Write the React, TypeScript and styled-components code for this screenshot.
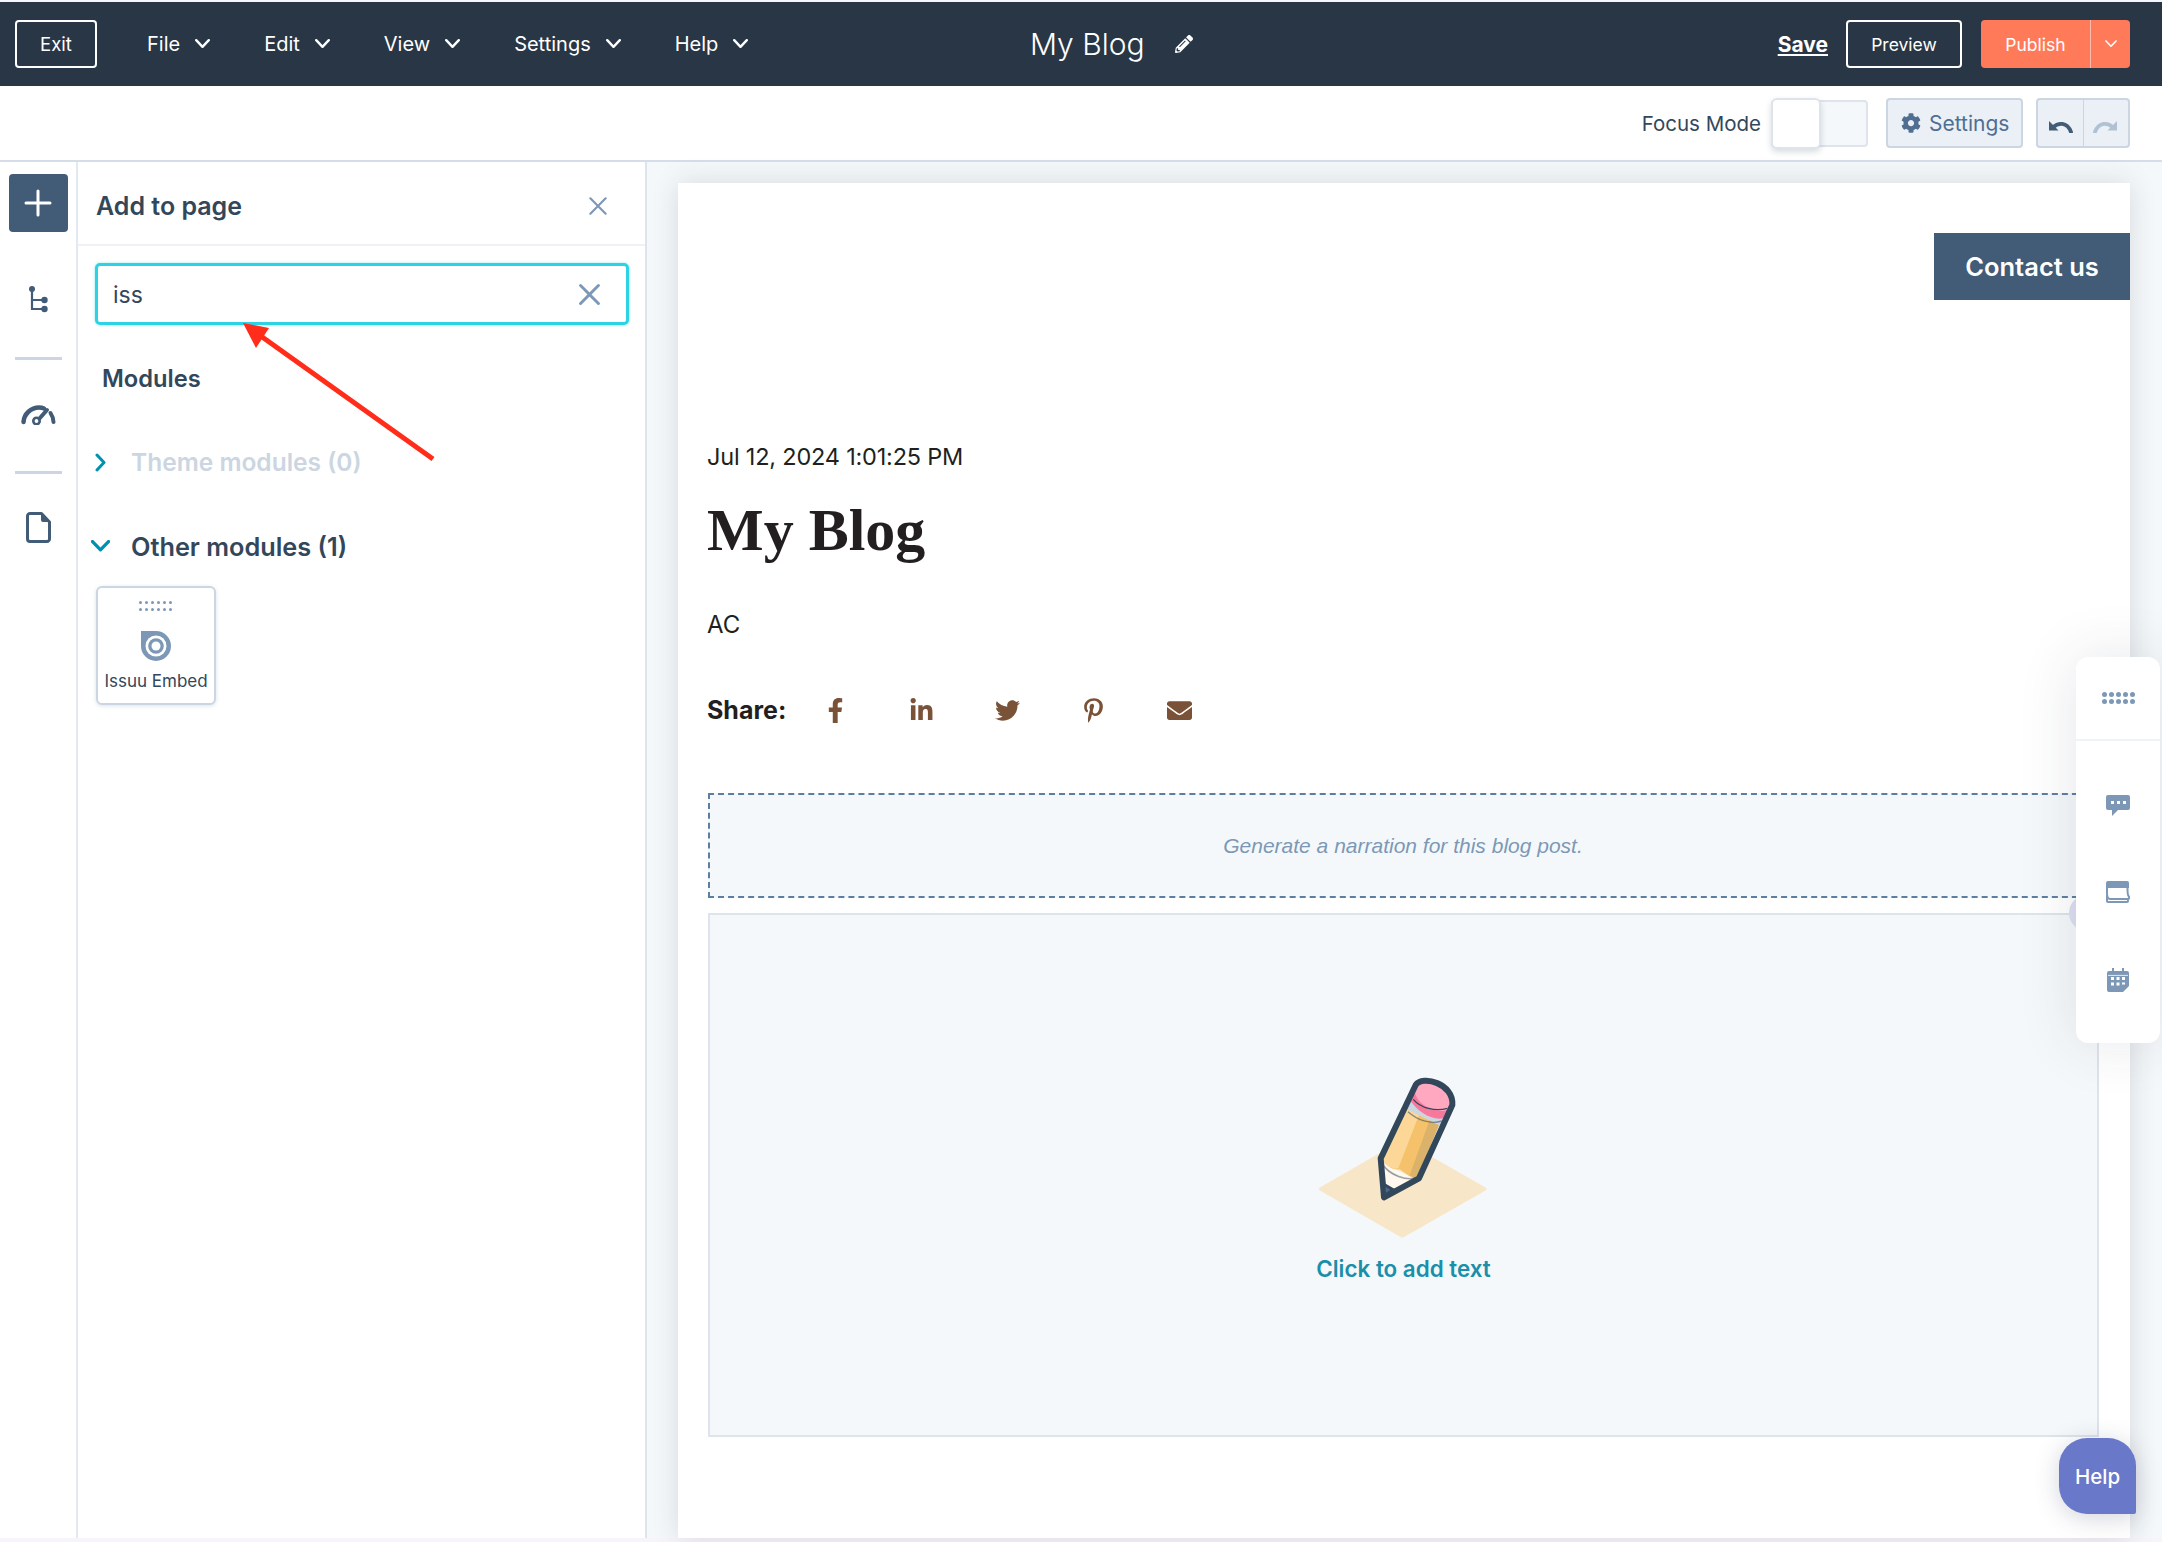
import React from "react";
import styled, { createGlobalStyle } from "styled-components";
import { FaFacebookF, FaLinkedinIn, FaTwitter, FaPinterestP, FaEnvelope, FaCog, FaPencilAlt } from "react-icons/fa";

const Global = createGlobalStyle`
  html, body { margin: 0; padding: 0; background: #f5f8fa; }
  * { box-sizing: border-box; }
  #root { width: 2162px; height: 1542px; overflow: hidden; }
`;

const UI = `Inter, "Noto Sans", sans-serif`;
const BLOG = `Inter, "Open Sans", sans-serif`;

const Shell = styled.div`
  position: relative;
  width: 2162px;
  height: 1542px;
  padding: 2px 0 4px;
  display: flex;
  flex-direction: column;
  background: #f8f4fb;
  font-family: ${UI};
  overflow: hidden;
`;
const TopBar = styled.header`
  flex: 0 0 84px;
  display: flex;
  align-items: center;
  background: #293645;
  color: #fff;
  padding: 0 32px 0 15px;
`;
const TopLeft = styled.div`
  flex: 0 0 1015px;
  display: flex;
  align-items: center;
`;
const OutlineButton = styled.button<{ $w: number; $size: number }>`
  width: ${(p) => p.$w}px;
  height: 48px;
  background: transparent;
  border: 2px solid #fff;
  border-radius: 4px;
  color: #fff;
  font: 400 ${(p) => p.$size}px ${UI};
  padding: 0;
`;
const MenuList = styled.nav`
  display: flex;
  margin-left: 50px;
  gap: 54px;
`;
const MenuItem = styled.span`
  display: flex;
  align-items: center;
  gap: 15px;
  font-size: 20px;
  font-weight: 400;
`;
const TitleGroup = styled.div`
  flex: 1;
  display: flex;
  align-items: center;
  gap: 30px;
`;
const DocTitle = styled.span`
  font-size: 30px;
  font-weight: 300;
  line-height: 40px;
`;
const TopRight = styled.div`
  display: flex;
  align-items: center;
`;
const SaveLink = styled.a`
  font-size: 21px;
  font-weight: 700;
  text-decoration: underline;
  margin-right: 18px;
`;
const PublishGroup = styled.div`
  display: flex;
  height: 48px;
  width: 149px;
  margin-left: 19px;
  background: #ff7a59;
  border-radius: 4px;
  font-size: 17.5px;
`;
const PublishLabel = styled.span`
  flex: 0 0 110px;
  display: flex;
  align-items: center;
  justify-content: center;
  border-right: 1px solid #ffbcac;
`;
const PublishCaret = styled.span`
  flex: 1;
  display: flex;
  align-items: center;
  justify-content: center;
`;
const SubBar = styled.div`
  flex: 0 0 76px;
  display: flex;
  align-items: center;
  justify-content: flex-end;
  background: #fff;
  border-bottom: 2px solid #d5dee8;
  padding: 0 32px 0 0;
`;
const FocusLabel = styled.span`
  font-size: 20.5px;
  color: #33475b;
  margin-right: 10px;
`;
const Toggle = styled.div`
  position: relative;
  width: 97px;
  height: 47px;
  background: #f5f8fa;
  border: 2px solid #dfe3eb;
  border-radius: 4px;
`;
const ToggleKnob = styled.div`
  position: absolute;
  left: -2px;
  top: -4px;
  width: 50px;
  height: 51px;
  background: #fff;
  border: 2px solid #dfe3eb;
  border-radius: 6px;
  box-shadow: 0 3px 6px rgba(40, 60, 80, 0.18);
`;
const SettingsButton = styled.button`
  width: 137px;
  height: 50px;
  margin-left: 18px;
  display: flex;
  align-items: center;
  gap: 8px;
  padding: 0 0 0 13px;
  background: #eaf0f6;
  border: 2px solid #cbd6e2;
  border-radius: 4px;
  color: #506e91;
  font: 400 21px ${UI};
`;
const UndoGroup = styled.div`
  width: 94px;
  height: 50px;
  margin-left: 13px;
  display: flex;
  background: #eaf0f6;
  border: 2px solid #cbd6e2;
  border-radius: 4px;
`;
const UndoCell = styled.span<{ $divider?: boolean; $color: string }>`
  flex: 1;
  display: flex;
  align-items: center;
  justify-content: center;
  padding-top: 6px;
  color: ${(p) => p.$color};
  border-right: ${(p) => (p.$divider ? "1px solid #cbd6e2" : "none")};
`;
const Main = styled.div`
  flex: 1;
  min-height: 0;
  display: flex;
`;
const Rail = styled.aside`
  flex: 0 0 78px;
  display: flex;
  flex-direction: column;
  align-items: center;
  padding-top: 12px;
  background: #fff;
  border-right: 2px solid #e3e9f0;
`;
const AddButton = styled.div`
  width: 59px;
  height: 58px;
  display: flex;
  align-items: center;
  justify-content: center;
  background: #425b76;
  border-radius: 4px;
  margin-bottom: 54px;
`;
const RailIcon = styled.svg<{ $after: number }>`
  display: block;
  margin-bottom: ${(p) => p.$after}px;
`;
const RailRule = styled.div<{ $after: number }>`
  width: 47px;
  height: 3px;
  background: #cbd6e2;
  margin-bottom: ${(p) => p.$after}px;
`;
const Panel = styled.section`
  flex: 0 0 569px;
  background: #fff;
  border-right: 2px solid #dfe3eb;
  color: #33475b;
`;
const PanelHead = styled.div`
  height: 84px;
  display: flex;
  align-items: center;
  justify-content: space-between;
  padding: 6px 38px 0 18px;
  border-bottom: 2px solid #eef2f6;
`;
const PanelTitle = styled.h2`
  margin: 0;
  font-size: 25px;
  font-weight: 600;
`;
const SearchBox = styled.div`
  margin: 17px 0 0 17px;
  width: 534px;
  height: 62px;
  display: flex;
  align-items: center;
  justify-content: space-between;
  padding: 1px 26px 0 15px;
  border: 3px solid #2dd3e4;
  border-radius: 5px;
  background: #fff;
  font-size: 23px;
  box-shadow: 0 0 3px rgba(0, 208, 228, 0.45);
`;
const SectionTitle = styled.h3`
  margin: 39px 0 0 24px;
  font-size: 23.7px;
  line-height: 30px;
  font-weight: 600;
`;
const Group = styled.div<{ $top: number; $muted?: boolean; $size: number }>`
  display: flex;
  align-items: center;
  height: 30px;
  margin-top: ${(p) => p.$top}px;
  color: ${(p) => (p.$muted ? "#cbd6e2" : "#33475b")};
  font-size: ${(p) => p.$size}px;
  font-weight: 600;
`;
const GroupChevron = styled.span`
  flex: 0 0 53px;
  display: flex;
  justify-content: center;
  padding-right: 9px;
`;
const ModuleCard = styled.div`
  margin: 25px 0 0 18px;
  width: 120px;
  height: 119px;
  display: flex;
  flex-direction: column;
  align-items: center;
  padding-top: 13px;
  border: 2px solid #cbd6e2;
  border-radius: 6px;
  box-shadow: 0 1px 4px rgba(80, 110, 145, 0.2);
  background: #fff;
`;
const ModuleGrip = styled.svg`
  display: block;
`;
const ModuleLogo = styled.svg`
  display: block;
  margin-top: 20px;
`;
const ModuleName = styled.span`
  margin-top: 10px;
  font-size: 17px;
  font-weight: 400;
  white-space: nowrap;
  color: #33475b;
`;
const Canvas = styled.main`
  flex: 1;
  min-width: 0;
  padding: 21px 32px 0 31px;
  background: #f5f8fa;
`;
const BlogPage = styled.div`
  height: 100%;
  background: #fff;
  box-shadow: 0 0 26px rgba(30, 40, 50, 0.14);
  display: flex;
  flex-direction: column;
  font-family: ${BLOG};
  color: #231f20;
`;
const BlogHeader = styled.div`
  display: flex;
  justify-content: flex-end;
  padding-top: 50px;
`;
const ContactButton = styled.a`
  width: 196px;
  height: 67px;
  display: flex;
  align-items: center;
  justify-content: center;
  background: #425b76;
  color: #fff;
  font-size: 25.5px;
  font-weight: 600;
`;
const BlogBody = styled.div`
  padding: 142px 0 0 29px;
`;
const DateLine = styled.div`
  font-size: 23.5px;
  line-height: 30px;
  font-weight: 400;
  letter-spacing: -0.2px;
`;
const BlogTitle = styled.h1`
  margin: 23px 0 0;
  font-family: "Liberation Serif", "DejaVu Serif", serif;
  font-size: 60px;
  line-height: 70px;
  font-weight: 700;
`;
const Author = styled.div`
  margin-top: 45px;
  font-size: 24px;
  line-height: 30px;
`;
const ShareRow = styled.div`
  display: flex;
  align-items: center;
  height: 34px;
  margin-top: 53px;
  font-size: 25px;
  font-weight: 700;
`;
const ShareLabel = styled.span`
  width: 85px;
`;
const ShareIcon = styled.span`
  flex: 0 0 86px;
  display: flex;
  justify-content: center;
  color: #7a5238;
  font-size: 25px;
`;
const Narration = styled.div`
  margin: 66px 0 0 1px;
  height: 105px;
  width: 1400px;
  display: flex;
  align-items: center;
  justify-content: center;
  padding-right: 10px;
  background: #f5f8fa;
  border: 2px dashed #5d7ea3;
  font: italic 400 21px "Liberation Sans", Arial, sans-serif;
  color: #7c98b6;
`;
const TextArea = styled.div`
  margin: 15px 0 0 1px;
  height: 524px;
  width: 1391px;
  display: flex;
  flex-direction: column;
  align-items: center;
  padding-top: 155px;
  background: #f5f8fa;
  border: 2px solid #dfe3eb;
`;
const PencilSvg = styled.svg`
  display: block;
  flex: none;
`;
const AddText = styled.span`
  margin-top: 15px;
  font-size: 22.4px;
  font-weight: 600;
  color: #1a8fa9;
  line-height: 28px;
`;
const Handle = styled.div`
  position: absolute;
  left: 2069px;
  top: 895px;
  width: 36px;
  height: 36px;
  border-radius: 50%;
  background: #dde0f1;
`;
const Dock = styled.div`
  position: absolute;
  left: 2076px;
  top: 657px;
  width: 84px;
  height: 386px;
  background: #fff;
  border-radius: 12px;
  box-shadow: 0 0 60px rgba(40, 50, 70, 0.12);
`;
const DockTop = styled.div`
  height: 84px;
  display: flex;
  align-items: center;
  justify-content: center;
  border-bottom: 2px solid #eef3f8;
`;
const DockList = styled.div`
  display: flex;
  flex-direction: column;
  align-items: center;
  gap: 65px;
  padding: 54px 0 0;
`;
const HelpBubble = styled.div`
  position: absolute;
  left: 2059px;
  top: 1438px;
  width: 77px;
  height: 76px;
  display: flex;
  align-items: center;
  justify-content: center;
  background: #6a78c9;
  border-radius: 28px 28px 2px 28px;
  color: #fff;
  font: 500 20.5px ${BLOG};
  box-shadow: 0 4px 24px rgba(50, 60, 90, 0.22);
`;
const Pointer = styled.svg`
  position: absolute;
  left: 230px;
  top: 310px;
  pointer-events: none;
`;
const FlipSvg = styled.svg<{ $flip?: boolean }>`
  display: block;
  transform: ${(p) => (p.$flip ? "scaleX(-1)" : "none")};
`;

const Chevron = ({ size = 15, color = "#fff", w = 2.4 }: { size?: number; color?: string; w?: number }) => (
  <svg width={size} height={size * 0.62} viewBox="0 0 15 9.3" fill="none">
    <path d="M1.2 1.2 7.5 7.8l6.3-6.6" stroke={color} strokeWidth={w} strokeLinecap="round" strokeLinejoin="round" />
  </svg>
);
const Cross = ({ size, w, color = "#7c98b6" }: { size: number; w: number; color?: string }) => (
  <svg width={size} height={size} viewBox="0 0 20 20" fill="none">
    <path d="M1.5 1.5l17 17M18.5 1.5l-17 17" stroke={color} strokeWidth={w} strokeLinecap="round" />
  </svg>
);
const UndoGlyph = ({ flip }: { flip?: boolean }) => (
  <FlipSvg $flip={flip} width="25" height="13" viewBox="0 0 25 13" fill="none">
    <path d="M1 1v9.500h9.500z" fill="currentColor" />
    <path d="M5 7.500C10 2.500 19 1.500 23 12" stroke="currentColor" strokeWidth="3.800" strokeLinecap="round" />
  </FlipSvg>
);

const PencilArt = () => (
  <PencilSvg width="170" height="170" viewBox="120 90 510 510" fill="none">
    <path d="M125 447 370 306 617 447 370 588z" fill="#f8e6c8" stroke="#f8e6c8" strokeWidth="10" strokeLinejoin="round" />
    <path d="M312 370 412 418 318 470z" fill="#fff8ee" />
    <path d="M318 430 352 450 318 470z" fill="#425b76" />
    <path d="M385 205 480 255 415 410C395 420 380 398 362 388 345 390 325 385 310 355z" fill="#f5c26b" />
    <path d="M385 205 420 225 358 385C345 388 325 385 310 355z" fill="#fcd797" />
    <path d="M452 240 480 255 415 410C408 414 400 412 392 406z" fill="#dbb26a" />
    <path d="M395 178 505 225 490 260 378 205z" fill="#cbd6e2" />
    <path d="M410 135 520 195 503 232C470 245 420 225 392 178z" fill="#f8789b" />
    <ellipse cx="466" cy="168" rx="62" ry="40" transform="rotate(26 466 168)" fill="#ffa8c0" />
    <path d="M403 178C425 205 470 215 505 205" stroke="#33475b" strokeWidth="4" />
    <path d="M387 215C415 240 455 255 488 243" stroke="#33475b" strokeWidth="4" opacity=".55" />
    <path d="M315 472 305 355 410 135C430 105 525 130 520 195L420 415z" stroke="#33475b" strokeWidth="18" strokeLinejoin="round" />
    <path d="M310 372C330 405 385 425 416 412" stroke="#33475b" strokeWidth="5" opacity=".5" />
    <path d="M318 432 352 450 318 470z" fill="#33475b" />
    <path d="M320 440 334 450 320 458z" fill="#4b6a8e" />
  </PencilSvg>
);

const Dots = () => (
  <svg width="33" height="12" viewBox="0 0 33 12" fill="#7c98b6">
    {[2.5, 9.5, 16.5, 23.5, 30.5].map((x) => (
      <React.Fragment key={x}>
        <circle cx={x} cy="2.500" r="2.500" />
        <circle cx={x} cy="9.500" r="2.500" />
      </React.Fragment>
    ))}
  </svg>
);
const ChatGlyph = () => (
  <svg width="24" height="21" viewBox="0 0 24 21">
    <path d="M2 0h20a2 2 0 0 1 2 2v11a2 2 0 0 1-2 2H12l-6 6v-6H2a2 2 0 0 1-2-2V2a2 2 0 0 1 2-2z" fill="#7c98b6" />
    <path d="M5 6h3v3H5zM11 6h3v3h-3zM17 6h3v3h-3z" fill="#fff" />
  </svg>
);
const NoteGlyph = () => (
  <svg width="24" height="22" viewBox="0 0 24 22" fill="none">
    <path d="M2 0h19a2 2 0 0 1 2 2v5H0V2a2 2 0 0 1 2-2z" fill="#7c98b6" />
    <path d="M1 7v5c0 3 1 6 3 6h18c1.500 0 1.500-2 .5-3-1-1-1-5-1-8" stroke="#7c98b6" strokeWidth="2" />
    <path d="M1 14v6a1 1 0 0 0 1 1h19a1 1 0 0 0 1-1v-1" stroke="#7c98b6" strokeWidth="2" />
  </svg>
);
const CalendarGlyph = () => (
  <svg width="22" height="24" viewBox="0 0 22 24">
    <path d="M5 0h2v3h8V0h2v3h3a2 2 0 0 1 2 2v13l-6 6H2a2 2 0 0 1-2-2V5a2 2 0 0 1 2-2h3z" fill="#7c98b6" />
    <path d="M4 9h3v3H4zM9.500 9h3v3h-3zM15 9h3v3h-3zM4 14.500h3v3H4zM9.500 14.500h3v3h-3zM15 14.500h3v2h-3z" fill="#fff" />
    <path d="M1 7.400h20" stroke="#fff" strokeWidth=".8" />
  </svg>
);

export default function App() {
  const menus = ["File", "Edit", "View", "Settings", "Help"];
  return (
    <Shell>
      <Global />
      <TopBar>
        <TopLeft>
          <OutlineButton $w={82} $size={18.5}>Exit</OutlineButton>
          <MenuList>
            {menus.map((m) => (
              <MenuItem key={m}>
                {m}
                <Chevron />
              </MenuItem>
            ))}
          </MenuList>
        </TopLeft>
        <TitleGroup>
          <DocTitle>My Blog</DocTitle>
          <FaPencilAlt size={18} color="#fff" />
        </TitleGroup>
        <TopRight>
          <SaveLink>Save</SaveLink>
          <OutlineButton $w={116} $size={17.5}>Preview</OutlineButton>
          <PublishGroup>
            <PublishLabel>Publish</PublishLabel>
            <PublishCaret>
              <Chevron size={12} w={2} />
            </PublishCaret>
          </PublishGroup>
        </TopRight>
      </TopBar>
      <SubBar>
        <FocusLabel>Focus Mode</FocusLabel>
        <Toggle>
          <ToggleKnob />
        </Toggle>
        <SettingsButton>
          <FaCog size={20} />
          Settings
        </SettingsButton>
        <UndoGroup>
          <UndoCell $divider $color="#425b76">
            <UndoGlyph />
          </UndoCell>
          <UndoCell $color="#b0c1d4">
            <UndoGlyph flip />
          </UndoCell>
        </UndoGroup>
      </SubBar>
      <Main>
        <Rail>
          <AddButton>
            <svg width="28" height="28" viewBox="0 0 28 28" fill="none">
              <path d="M14 2v24M2 14h24" stroke="#fff" strokeWidth="3" strokeLinecap="round" />
            </svg>
          </AddButton>
          <RailIcon $after={43} width="20" height="28" viewBox="0 0 20 28" fill="none">
            <path d="M4 3v20h12M4 14h12" stroke="#425b76" strokeWidth="2.200" />
            <circle cx="4" cy="3" r="3" fill="#425b76" />
            <circle cx="16.500" cy="14" r="3.200" fill="#425b76" />
            <circle cx="16.500" cy="23" r="3.200" fill="#425b76" />
          </RailIcon>
          <RailRule $after={45} />
          <RailIcon $after={46} width="35" height="20" viewBox="0 0 35 20" fill="none">
            <path d="M2.500 17C3 9 10 2.500 18 2.500c2 0 3.500.3 5 1" stroke="#425b76" strokeWidth="4.500" strokeLinecap="round" />
            <path d="M29.500 8c1.700 2.500 2.800 5.500 3 9" stroke="#425b76" strokeWidth="4" strokeLinecap="round" />
            <path d="M26 5 18.500 13.500" stroke="#425b76" strokeWidth="4" strokeLinecap="round" />
            <circle cx="15.500" cy="16" r="3.200" stroke="#425b76" strokeWidth="2.600" />
          </RailIcon>
          <RailRule $after={38} />
          <RailIcon $after={0} width="25" height="31" viewBox="0 0 25 31" fill="none">
            <path d="M4 1.500h11.500l8 8.500v17a2.500 2.500 0 0 1-2.500 2.500H4A2.500 2.500 0 0 1 1.500 27V4A2.500 2.500 0 0 1 4 1.500z" stroke="#425b76" strokeWidth="3" strokeLinejoin="round" />
            <path d="M15 1.500 23.500 10H17a2 2 0 0 1-2-2z" fill="#425b76" />
          </RailIcon>
        </Rail>
        <Panel>
          <PanelHead>
            <PanelTitle>Add to page</PanelTitle>
            <Cross size={18} w={2.4} />
          </PanelHead>
          <SearchBox>
            iss
            <Cross size={21} w={2.8} />
          </SearchBox>
          <SectionTitle>Modules</SectionTitle>
          <Group $top={53} $muted $size={24.5}>
            <GroupChevron>
              <svg width="11" height="19" viewBox="0 0 11 19" fill="none">
                <path d="M2 2l7 7.500L2 17" stroke="#0091ae" strokeWidth="3" strokeLinecap="round" strokeLinejoin="round" />
              </svg>
            </GroupChevron>
            Theme modules (0)
          </Group>
          <Group $top={54} $size={25.3}>
            <GroupChevron>
              <Chevron size={19} color="#0091ae" w={2.6} />
            </GroupChevron>
            Other modules (1)
          </Group>
          <ModuleCard>
            <ModuleGrip width="34" height="10" viewBox="0 0 34 10" fill="#7c98b6">
              {[1.5, 7.5, 13.5, 19.5, 25.5, 31.5].map((x) => (
                <React.Fragment key={x}>
                  <circle cx={x} cy="1.500" r="1.500" />
                  <circle cx={x} cy="8.500" r="1.500" />
                </React.Fragment>
              ))}
            </ModuleGrip>
            <ModuleLogo width="30" height="30" viewBox="0 0 30 30">
              <path d="M0 0h15a15 15 0 1 1-15 15z" fill="#7c98b6" />
              <circle cx="15" cy="15" r="10.500" fill="#fff" />
              <circle cx="15" cy="15" r="7.800" fill="#7c98b6" />
              <circle cx="15" cy="15" r="4.500" fill="#fff" />
            </ModuleLogo>
            <ModuleName>Issuu Embed</ModuleName>
          </ModuleCard>
        </Panel>
        <Canvas>
          <BlogPage>
            <BlogHeader>
              <ContactButton>Contact us</ContactButton>
            </BlogHeader>
            <BlogBody>
              <DateLine>Jul 12, 2024 1:01:25 PM</DateLine>
              <BlogTitle>My Blog</BlogTitle>
              <Author>AC</Author>
              <ShareRow>
                <ShareLabel>Share:</ShareLabel>
                <ShareIcon><FaFacebookF /></ShareIcon>
                <ShareIcon><FaLinkedinIn /></ShareIcon>
                <ShareIcon><FaTwitter /></ShareIcon>
                <ShareIcon><FaPinterestP /></ShareIcon>
                <ShareIcon><FaEnvelope /></ShareIcon>
              </ShareRow>
              <Narration>Generate a narration for this blog post.</Narration>
              <TextArea>
                <PencilArt />
                <AddText>Click to add text</AddText>
              </TextArea>
            </BlogBody>
          </BlogPage>
        </Canvas>
      </Main>
      <Handle />
      <Dock>
        <DockTop>
          <Dots />
        </DockTop>
        <DockList>
          <ChatGlyph />
          <NoteGlyph />
          <CalendarGlyph />
        </DockList>
      </Dock>
      <HelpBubble>Help</HelpBubble>
      <Pointer width="220" height="160" viewBox="230 310 220 160" fill="none">
        <path d="M433 459 258 334" stroke="#ff2d1a" strokeWidth="5" />
        <path d="M243 323 269 328 256 348z" fill="#ff2d1a" />
      </Pointer>
    </Shell>
  );
}
